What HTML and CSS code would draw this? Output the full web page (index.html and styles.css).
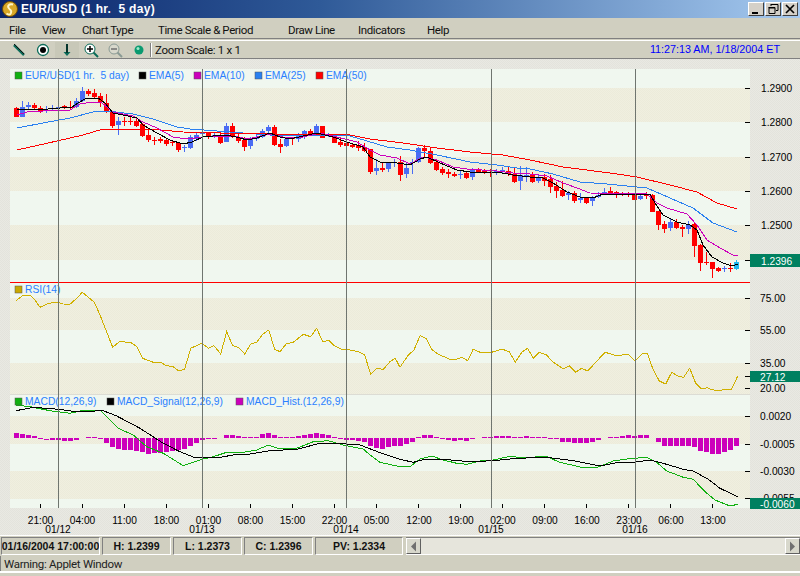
FILE: index.html
```html
<!DOCTYPE html>
<html lang="en">
<head>
<meta charset="utf-8">
<title>EUR/USD (1 hr. 5 day)</title>
<link rel="stylesheet" href="styles.css">
</head>
<body>
<div class="window">
  <header class="titlebar">
    <svg class="appicon" width="16" height="16" viewBox="0 0 16 16"><circle cx="8" cy="8" r="7.5" fill="#d8a828" stroke="#6b4a08"/><path d="M11 3.500C7 2.500 5 5 7 7.500s3 2 2 4.500-3 1.500-4.500.5" fill="none" stroke="#fff6c8" stroke-width="2"/></svg>
    <span class="title">EUR/USD (1 hr.&nbsp; 5 day)</span>
    <div class="winbtns">
      <span class="winbtn"><svg width="14" height="12" viewBox="0 0 14 12"><rect x="3" y="9" width="6" height="2" fill="#000"/></svg></span>
      <span class="winbtn"><svg width="14" height="12" viewBox="0 0 14 12"><path d="M5 1.500h7v6h-2M5 1v2M3 4.500h6v6H3zM3 4v1h6" fill="none" stroke="#000"/></svg></span>
      <span class="winbtn"><svg width="14" height="12" viewBox="0 0 14 12"><path d="M3 2l8 8M11 2l-8 8" stroke="#000" stroke-width="1.700"/></svg></span>
    </div>
  </header>
  <nav class="menubar">
    <span>File</span><span>View</span><span>Chart Type</span><span>Time Scale &amp; Period</span><span>Draw Line</span><span>Indicators</span><span>Help</span>
  </nav>
  <div class="toolbar">
    <span class="tool"><svg width="16" height="16" viewBox="0 0 16 16"><path d="M3 3l10 10" stroke="#0a6b58" stroke-width="2.500"/><path d="M3 2l10 10" stroke="#111"/></svg></span>
    <span class="tool"><svg width="16" height="16" viewBox="0 0 16 16"><circle cx="8" cy="8" r="5.500" fill="#fff" stroke="#0a6b58" stroke-width="1.300"/><circle cx="8" cy="8" r="3" fill="#000"/></svg></span>
    <span class="tool tool-dark"><svg width="16" height="16" viewBox="0 0 16 16"><path d="M7 2h2v8h2.500L8 14 4.500 10H7z" fill="#0a6b58"/><path d="M8 2v9" stroke="#000"/></svg></span>
    <span class="tool"><svg width="16" height="16" viewBox="0 0 16 16"><path d="M10 10l5 5" stroke="#0a6b58" stroke-width="2"/><circle cx="7" cy="7" r="5" fill="#fff" stroke="#0a6b58"/><path d="M4 7h6M7 4v6" stroke="#000" stroke-width="1.500"/></svg></span>
    <span class="tool"><svg width="16" height="16" viewBox="0 0 16 16"><path d="M10 10l5 5" stroke="#8a9a94" stroke-width="2"/><circle cx="7" cy="7" r="5" fill="#d8d8cc" stroke="#8a9a94"/><path d="M4 7h6" stroke="#707070" stroke-width="1.500"/></svg></span>
    <span class="tool"><svg width="16" height="16" viewBox="0 0 16 16"><circle cx="8" cy="8" r="4.500" fill="#0a9a70"/><circle cx="7" cy="6.500" r="1.500" fill="#9fe8c8"/></svg></span>
    <span class="toolsep"></span>
    <span class="zoomscale">Zoom Scale: 1 x 1</span>
    <span class="clock">11:27:13 AM, 1/18/2004 ET</span>
  </div>
  <svg id="chart" class="chart" width="800" height="476" viewBox="0 59 800 476">
    <defs>
      <pattern id="tan" width="2" height="2" patternUnits="userSpaceOnUse"><rect width="2" height="2" fill="#f0efe0"/><rect width="1" height="1" fill="#ecebda"/><rect x="1" y="1" width="1" height="1" fill="#ecebda"/></pattern>
      <pattern id="grey" width="2" height="2" patternUnits="userSpaceOnUse"><rect width="2" height="2" fill="#e9e9e3"/><rect width="1" height="1" fill="#e3e3dc"/><rect x="1" y="1" width="1" height="1" fill="#e3e3dc"/></pattern>
    </defs>
    <rect x="0" y="59" width="800" height="476" fill="url(#grey)"/>
    <rect x="10" y="69" width="740" height="439" fill="#f0f7ef"/>
    <g fill="url(#tan)">
      <rect x="10" y="88" width="740" height="34"/><rect x="10" y="157" width="740" height="34"/><rect x="10" y="225" width="740" height="35"/>
      <rect x="10" y="298" width="740" height="32"/><rect x="10" y="363" width="740" height="31"/>
      <rect x="10" y="416" width="740" height="28"/><rect x="10" y="471" width="740" height="28"/>
    </g>
    <rect x="10" y="394" width="740" height="1" fill="#dcdcd4"/>
    <g id="candles"></g>
    <g id="hist"></g>
    <g id="lines"></g>
    <g class="legend">
      <rect class="sw" x="15" y="72" width="7" height="7" fill="#10b010"/><text x="25" y="79">EUR/USD(1 hr.&#160; 5 day)</text>
      <rect class="sw" x="139" y="72" width="7" height="7" fill="#000"/><text x="149" y="79">EMA(5)</text>
      <rect class="sw" x="194" y="72" width="7" height="7" fill="#cc00bb"/><text x="204" y="79">EMA(10)</text>
      <rect class="sw" x="255" y="72" width="7" height="7" fill="#2a80f0"/><text x="265" y="79">EMA(25)</text>
      <rect class="sw" x="316" y="72" width="7" height="7" fill="#ff0000"/><text x="326" y="79">EMA(50)</text>
      <rect class="sw" x="15" y="286" width="7" height="7" fill="#c8a800"/><text x="25" y="293">RSI(14)</text>
      <rect class="sw" x="15" y="398" width="7" height="7" fill="#10b010"/><text x="25" y="405">MACD(12,26,9)</text>
      <rect class="sw" x="107" y="398" width="7" height="7" fill="#000"/><text x="117" y="405">MACD_Signal(12,26,9)</text>
      <rect class="sw" x="236" y="398" width="7" height="7" fill="#cc00bb"/><text x="246" y="405">MACD_Hist.(12,26,9)</text>
    </g>
    <rect x="10" y="282" width="740" height="1" fill="#ff0000"/>
    <g fill="#6f756f">
      <rect x="58" y="69" width="1" height="439"/><rect x="202" y="69" width="1" height="439"/><rect x="346" y="69" width="1" height="439"/><rect x="491" y="69" width="1" height="439"/><rect x="635" y="69" width="1" height="439"/>
    </g>
    <g id="ticks" fill="#000"></g>
    <g class="axis">
      <text x="761" y="92">1.2900</text><text x="761" y="126">1.2800</text><text x="761" y="161">1.2700</text><text x="761" y="195">1.2600</text><text x="761" y="229">1.2500</text>
      <text x="760" y="302">75.00</text><text x="760" y="334">55.00</text><text x="760" y="367">35.00</text><text x="760" y="392">20.00</text>
      <text x="760" y="420">0.0020</text><text x="760" y="448">-0.0005</text><text x="760" y="475">-0.0030</text><text x="760" y="502">-0.0055</text>
    </g>
    <g fill="#008060">
      <rect x="750" y="254" width="50" height="13"/><rect x="750" y="371" width="50" height="11"/><rect x="750" y="498" width="50" height="11"/>
    </g>
    <g class="badge">
      <text x="761" y="265">1.2396</text><text x="760" y="381">27.12</text><text x="760" y="508">-0.0060</text>
    </g>
    <g class="times">
      <text x="40.500" y="524">21:00</text><text x="82.500" y="524">04:00</text><text x="124.500" y="524">11:00</text><text x="166.500" y="524">18:00</text><text x="208.500" y="524">01:00</text><text x="250.500" y="524">08:00</text><text x="292.500" y="524">15:00</text><text x="334.500" y="524">22:00</text><text x="376.500" y="524">05:00</text><text x="419" y="524">12:00</text><text x="461" y="524">19:00</text><text x="503" y="524">02:00</text><text x="545" y="524">09:00</text><text x="587" y="524">16:00</text><text x="629" y="524">23:00</text><text x="671" y="524">06:00</text><text x="713" y="524">13:00</text>
      <text x="58" y="533">01/12</text><text x="202" y="533">01/13</text><text x="346" y="533">01/14</text><text x="491" y="533">01/15</text><text x="635" y="533">01/16</text>
    </g>
  </svg>
  <div class="statusrow">
    <span class="cell cell-date">01/16/2004 17:00:00</span>
    <span class="cell cell-h">H: 1.2399</span>
    <span class="cell cell-l">L: 1.2373</span>
    <span class="cell cell-c">C: 1.2396</span>
    <span class="cell cell-pv">PV: 1.2334</span>
    <div class="scrollbar">
      <span class="arrow"><svg width="15" height="17" viewBox="0 0 15 17"><path d="M5 8.500l5-5v10z" fill="#707070"/></svg></span>
      <span class="track"></span>
      <span class="arrow"><svg width="15" height="17" viewBox="0 0 15 17"><path d="M10 8.500l-5-5v10z" fill="#707070"/></svg></span>
    </div>
  </div>
  <div class="warning">Warning: Applet Window</div>
  <div class="footer"></div>
</div>
<script src="chart.js"></script>
</body>
</html>
```
FILE: styles.css
```css
* { box-sizing: border-box; }
html, body { margin: 0; padding: 0; overflow: hidden; }
body { width: 800px; height: 576px; background: #d0cfc0; font-family: "Liberation Sans", Arial, sans-serif; }
.window { width: 800px; height: 576px; display: flex; flex-direction: column; }

.titlebar { height: 18px; flex: none; display: flex; align-items: center; padding: 0 2px; background: linear-gradient(90deg, #0a246a 0%, #2f5a98 40%, #a6caf0 100%); }
.appicon { flex: none; }
.title { margin-left: 3px; color: #fff; font-weight: 700; font-size: 12px; letter-spacing: .3px; white-space: pre; }
.winbtns { margin-left: auto; display: flex; gap: 1px; }
.winbtn { width: 16px; height: 14px; display: flex; align-items: center; justify-content: center; background: #d4d0c8; border: 1px solid; border-color: #fff #404040 #404040 #fff; }

.menubar { height: 21px; flex: none; padding: 4px 0 0 9px; display: grid; grid-template-columns: 33px 40px 76px 130px 70px 69px auto; align-items: center; font-family: Roboto, sans-serif; font-size: 11.500px; letter-spacing: -.4px; color: #111; background: #d0cfc0; border-bottom: 1px solid #808080; }
.menubar span { white-space: nowrap; }

.toolbar { height: 19px; flex: none; margin-top: 1px; padding-left: 7px; display: flex; align-items: center; background: #d0cfc0; border-top: 1px solid #fff; border-bottom: 1px solid #808080; color: #111; }
.tool { width: 24px; height: 16px; display: flex; align-items: center; justify-content: center; }
.tool-dark { background: #c8c8b8; }
.toolsep { width: 2px; height: 14px; margin: 0 3px 0 -1px; background: #808080; border-right: 1px solid #fff; }
.zoomscale { padding-top: 1px; font-family: Roboto, sans-serif; font-size: 11.500px; letter-spacing: -.3px; white-space: nowrap; }
.clock { margin-left: auto; padding: 0 20px 2px 0; color: #0000ff; font-size: 10.750px; white-space: nowrap; }

.chart { display: block; flex: none; }
.legend text { font: 10.300px "Liberation Sans", sans-serif; fill: #2a7fff; }
.sw { stroke: #555; stroke-width: .5; }
.axis text { font: 10.200px "Liberation Sans", sans-serif; fill: #000; }
.badge text { font: 10.200px "Liberation Sans", sans-serif; fill: #fff; }
.times text { font: 10.200px "Liberation Sans", sans-serif; fill: #000; text-anchor: middle; }
.cline { fill: none; shape-rendering: crispEdges; stroke-width: 1; }

.statusrow { height: 21px; flex: none; display: flex; padding-top: 1px; border-top: 1px solid #fff; background: #d0cfc0; }
.cell { height: 18px; margin-right: 2px; display: flex; align-items: center; justify-content: center; overflow: hidden; white-space: nowrap; font-weight: 700; font-size: 10.500px; color: #111; background: #d0cfc0; border: 1px solid; border-color: #808080 #fff #fff #808080; }
.cell-date { width: 99px; margin-left: 1px; }
.cell-h { width: 69px; }
.cell-l { width: 69px; }
.cell-c { width: 69px; }
.cell-pv { width: 88px; }
.scrollbar { flex: 1; height: 18px; margin-left: 1px; display: flex; border-top: 1px solid #808080; border-bottom: 1px solid #fff; }
.arrow { width: 15px; flex: none; display: flex; background: #d8d8cc; border: 1px solid; border-color: #fff #606060 #606060 #fff; }
.arrow svg { display: block; margin: -1px; }
.track { flex: 1; background: #e6e5dc; }

.warning { height: 15px; flex: none; padding-left: 3px; font-family: Roboto, sans-serif; font-size: 11.500px; letter-spacing: -.3px; line-height: 16px; color: #222; background: #d0cfc0; border-left: 1px solid #808080; }
.footer { height: 5px; flex: none; background: #d0cfc0; border-top: 2px solid #fff; }
```
FILE: chart.js
```js
var NS = "http://www.w3.org/2000/svg";
function el(parent, name, attrs) {
  var n = document.createElementNS(NS, name);
  for (var k in attrs) n.setAttribute(k, attrs[k]);
  parent.appendChild(n);
  return n;
}
var RED = "#ff0000", BLU = "#4a6cf4", CYA = "#20b8f0";
// kind, body top, body bottom, high, low, in the 3x coordinates of the chart region they came from
var c1 = ["r85,110,80,110","b82,110,62,112","b75,82,67,88","r75,85,70,90","r85,97,78,98","b90,93,78,100","b83,88,75,92","b82,84,75,92","r78,85,74,88","r80,85,62,90","b63,82,55,85","b33,62,20,65","r33,42,27,48","r40,52,28,55","r48,65,40,80","r70,97,42,98","r97,137,95,145","b122,135,112,165","r122,125,110,137","r122,125,110,135","r122,137,115,140","r132,167,128,170","r165,180,150,185","r180,183,172,195","r177,183,170,190","r180,192,178,197","r187,190,180,198","r188,210,186,215","b200,203,195,215","b172,205,165,208","b165,178,160,182","b157,163,150,175","r158,172,155,178","b165,170,158,175","r165,190,155,192","b138,185,130,187","r138,172,128,175","r170,183,155,188","r180,200,170,212","b175,198,170,208","b172,178,160,182","b153,172,148,175","b140,152,135,165"];
var c2 = ["r50,105,45,107","r102,110,88,128","b88,108,85,110","r85,88,80,105","b78,88,68,95","b62,78,60,88","r63,72,58,75","b47,68,43,72","r48,83,48,84","b72,76,68,80","r75,98,72,100","r95,105,85,110","r100,107,92,112","r104,110,98,113","r105,115,92,122","r110,122,100,125","r118,185,116,192","b174,183,148,195","r175,180,158,187","b160,177,158,187","b155,158,148,172","r155,195,138,212","b173,192,160,205","b155,160,148,192","b113,157,112,160","r113,123,106,140","r122,158,115,162","r155,180,150,182","r177,188,170,195","r185,193,178,204","r192,198,187,200","b192,195,183,207","r190,204,185,207","b178,200,175,210","r178,185,175,190","r184,187,178,192","r185,187,178,200","b184,186,178,195","b180,185,170,190","r182,192,172,198","r192,215,170,220","b195,212,168,240","b195,198,170,215"];
var c3 = ["r72,95,65,98","b82,93,72,100","r82,92,72,108","r88,110,75,128","r107,122,95,145","r120,137,92,140","b130,134,122,150","r130,152,122,158","b144,150,130,160","r145,158,140,162","b142,154,138,167","b135,142,125,145","b125,132,115,135","r124,130,112,135","r126,130,122,143","r130,132,125,138","r130,132,125,140","r130,150,128,150","b137,147,130,150","r133,137,125,148","r135,185,133,187","r183,225,183,240","r222,237,213,248","b215,235,205,243","r215,234,208,236","r230,238,225,260","b224,236,212,252","r222,288,220,320","r285,338,283,362","r335,338,305,345","r336,357,335,383","r354,362,350,365","b353,358,348,365","r353,358,340,365","c335,358,330,360"];
function candle(str, i, oy) {
  var kind = str[0], v = str.slice(1).split(",").map(Number);
  var col = kind === "r" ? RED : kind === "b" ? BLU : CYA;
  var g = document.getElementById("candles"), x = 14 + 6 * i;
  var y = function (z) { return Math.round(oy + z / 3); };
  el(g, "rect", { x: x + 2, y: y(v[2]), width: 1, height: Math.max(1, y(v[3]) - y(v[2])), fill: col });
  el(g, "rect", { x: x, y: y(v[0]), width: 5, height: Math.max(1, y(v[1]) - y(v[0])), fill: col });
}
c1.forEach(function (s, i) { candle(s, i, 80); });
c2.forEach(function (s, i) { candle(s, i + 43, 110); });
c3.forEach(function (s, i) { candle(s, i + 86, 150); });

function pair(acc, v, i, arr) { if (i % 2 === 0) acc.push(v + "," + arr[i + 1]); return acc; }
function line(col, pts) {
  el(document.getElementById("lines"), "polyline", { "class": "cline", stroke: col, points: pts.join(" ") });
}
function seg(ox, oy, zs) {
  var out = [];
  for (var i = 0; i < zs.length; i += 2) out.push((ox + zs[i] / 3).toFixed(1) + "," + (oy + zs[i + 1] / 3).toFixed(1));
  return out;
}
line("#2a80f0", [17,128,43,123,70,118,93,112,107,111,133,114,153,119,177,127,190,129,217,131,243,133,270,135,303,135,350,136,367,141,387,147,410,150,437,155,470,162,497,165,517,168,530,169,553,174,580,182,607,184,647,188,670,198,693,208,713,223,737,232].reduce(pair, []));
line("#ff0000", [17,150,57,141,83,135,103,129,133,129,160,130,183,132,220,133,270,134,350,135,370,139,403,143,437,148,470,152,503,155,530,160,563,167,610,173,637,177,670,185,697,192,717,203,737,209].reduce(pair, []));
line("#cc00bb", [17,115,27,112,43,111,70,110,80,104,93,102,102,103,113,112,133,116,143,122,157,128,173,137,187,139,203,137,233,136,248,139,270,134,287,138,303,137,320,133,337,137,357,142,370,150,380,155,397,158,410,164,423,157,437,160,453,167,467,169,497,171,513,173,530,174,547,176,563,183,577,188,590,193,647,194,657,203,667,208,687,214,697,225,707,240,720,248,733,255,738,256].reduce(pair, []));
line("#000000", [17,110,25,109,48,109,72,107,78,103,87,98,98,98,105,103,113,113,123,115,137,118,143,125,157,133,170,140,183,144,192,142,203,137,213,136,227,135,240,138,247,140,257,138,270,133,280,137,290,139,303,136,317,133,333,137,347,142,363,147,370,157,380,162,397,163,410,165,420,159,427,157,440,163,457,170,470,172,497,172,513,175,530,177,543,178,553,183,567,192,580,197,593,198,603,194,627,194,650,194,655,203,663,215,677,222,690,225,697,230,703,245,712,257,723,263,732,266,738,264].reduce(pair, []));

line("#d0b000", seg(0, 280, [48,62,70,45,90,45,105,60,120,82,145,70,175,67,190,72,210,73,230,55,247,37,283,67,300,105,338,202,358,185,392,187,410,200,428,235,460,247,483,247,498,257,518,259,536,273,554,267,572,205,606,190,626,205,642,197,662,222,680,155,698,197,716,203,734,222,752,192,770,187,788,163,806,150,824,208,840,215,860,190,878,188,910,163,932,170,950,145,968,185,986,181,1004,198,1022,207,1040,208,1076,215,1094,225,1112,283,1130,265,1150,268,1170,245,1186,235,1200,262]).concat(
  seg(400, 280, [25,225,42,210,60,167,78,175,95,208,115,223,150,238,168,238,185,232,203,242,220,207,240,217,275,217,305,207,328,215,346,247,365,217,383,205,400,235,418,217,440,225,455,243,490,267,508,258,527,277,545,265,563,273,615,217,650,227,685,223,706,243,725,222,742,220,760,270,778,303,797,312,815,277,833,288,851,292,869,265,887,310,905,327,923,323,933,328,952,333,975,328,995,327,1013,288])));
line("#10b010", seg(0, 390, [48,45,90,50,150,62,210,70,255,60,300,60,325,85,355,115,400,135,440,170,490,190,550,227,610,207,640,200,680,187,730,187,770,180,805,165,840,177,890,175,940,155,985,152,1030,165,1090,177,1110,195,1140,217,1200,230]).concat(
  seg(400, 390, [30,230,60,207,95,198,130,210,170,220,200,223,245,212,280,210,325,200,370,202,440,200,480,217,550,233,590,233,640,213,680,207,740,202,770,217,800,243,850,262,880,268,915,305,945,330,990,348,1013,343])));
line("#000000", seg(0, 390, [48,62,100,52,175,58,230,65,310,62,350,78,420,115,490,160,540,185,585,203,660,202,700,195,750,192,810,182,890,178,960,160,1010,160,1080,165,1140,188,1200,208]).concat(
  seg(400, 390, [40,217,75,208,130,208,210,215,280,212,350,205,440,202,520,212,600,228,650,218,700,217,750,210,800,223,850,238,880,243,925,268,960,295,1013,320])));

// histogram: first,last pairs for each hour, 3x coordinates from y=390; 0 = no bar
var h = [130,145,132,145,135,145,138,145,145,147,146,149,145,150,145,151,145,152,145,153,145,150,0,0,142,144,142,144,144,146,145,158,145,172,145,177,145,180,145,180,145,183,145,187,145,191,145,190,145,188,145,187,145,182,145,180,145,177,145,167,145,158,145,150,145,147,144,146,0,0,135,145,135,145,138,145,141,145,141,145,140,145,132,145,129,145,136,145,141,145,142,145,141,145,138,145,134,145,132,145,129,145,131,145,134,145,142,145,144,147,145,150,145,151,145,152,145,155,145,168,145,175,145,177,145,170,145,167,145,167,145,162,145,155,142,144,135,145,135,144,142,144,144,147,145,150,145,152,145,150,145,152,145,147,0,0,142,144,142,144,139,144,139,144,139,144,142,144,141,144,139,144,142,144,142,144,142,144,144,146,145,148,145,156,145,156,145,158,145,159,145,159,145,155,145,150,0,0,142,144,140,144,139,144,135,144,137,144,135,144,135,144,0,0,145,156,145,167,145,167,145,167,145,167,145,167,145,172,145,183,145,187,145,191,145,191,145,187,145,180,145,167];
var hg = document.getElementById("hist");
for (var i = 0; i < h.length / 2; i++) {
  if (!h[2 * i]) continue;
  var barTop = Math.round(390 + h[2 * i] / 3), barBot = Math.round(390 + h[2 * i + 1] / 3);
  el(hg, "rect", { x: 14 + 6 * i, y: barTop, width: 5, height: Math.max(1, barBot - barTop), fill: "#cc00bb" });
}

// axis ticks
var tg = document.getElementById("ticks");
[88,122,157,191,225,260,298,330,363,388,376,416,444,471,498].forEach(function (y) {
  el(tg, "rect", { x: 745, y: y, width: 5, height: 1 });
});
for (var k = 0; k < 17; k++) el(tg, "rect", { x: 40 + Math.round(42.03 * k), y: 504, width: 1, height: 4 });
```
